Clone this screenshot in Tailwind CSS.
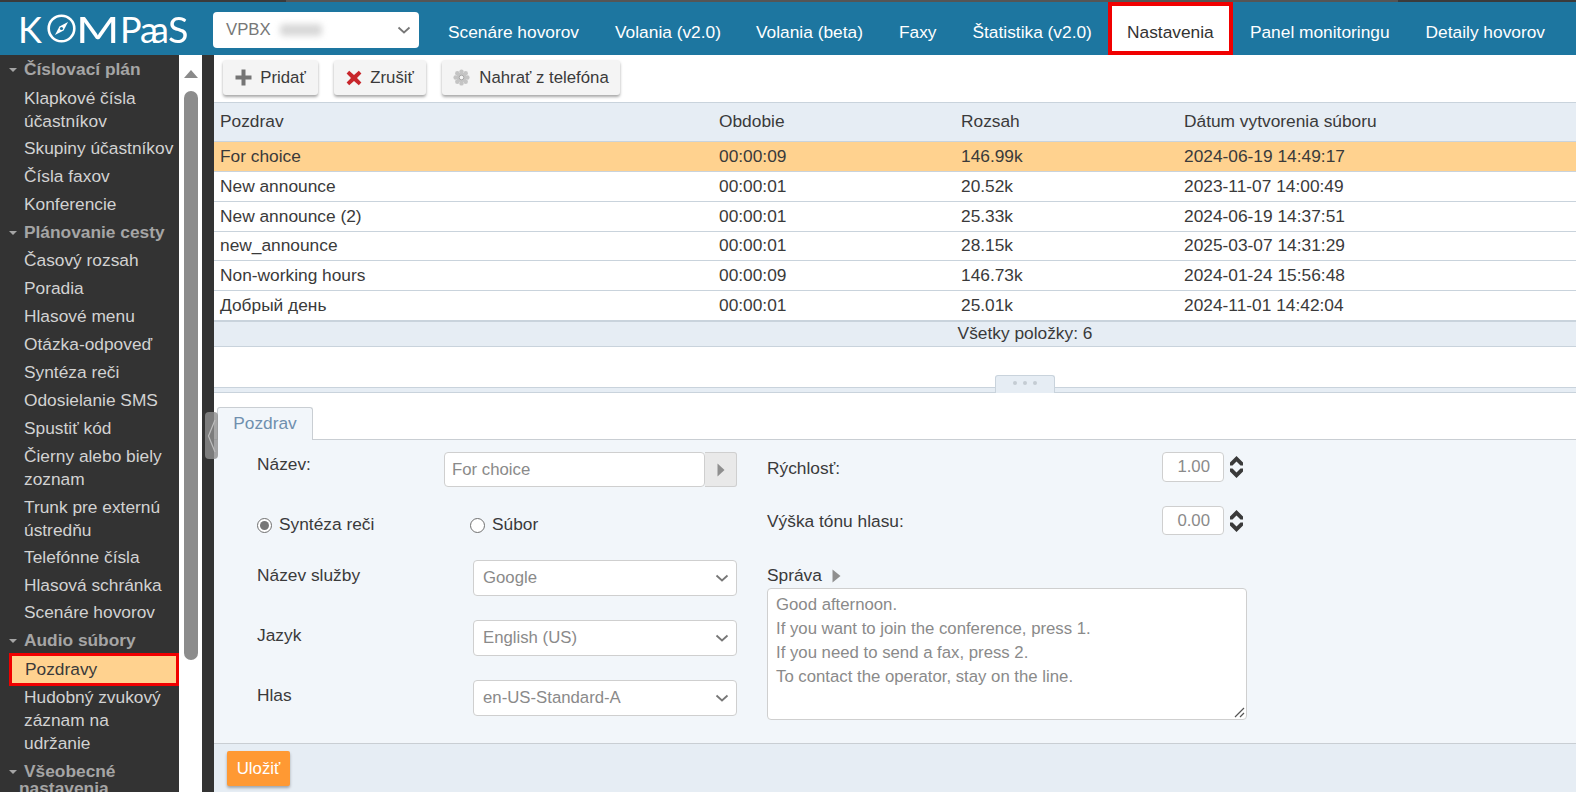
<!DOCTYPE html>
<html>
  <head>
    <meta charset="utf-8" />
    <title>Kompaas</title>
    <script src="https://cdn.jsdelivr.net/npm/@tailwindcss/browser@4"></script>
  </head>
  <body class="h-[792px] w-[1576px] overflow-hidden bg-white font-['Liberation_Sans',Arial,sans-serif] text-[17.33px] text-[#3a3a3a]">
    <!-- Top strip -->
    <div class="flex h-[2px]">
      <div class="w-[286px] bg-[#3b3b3b]"></div>
      <div class="w-[1112px] bg-[#555555]"></div>
      <div class="flex-1 bg-[#3b3b3b]"></div>
    </div>

    <!-- Header -->
    <header class="flex h-[53px] items-stretch bg-[#1d76a0] text-white">
      <div class="flex w-[213px] items-center pl-[18px] font-['Lato',sans-serif] text-[36px] font-normal leading-none">
        <span class="w-[29px]">K</span>
        <svg class="h-[29px] w-[29px]" viewBox="0 0 29 29" fill="none">
          <circle cx="14.5" cy="14.5" r="12.8" stroke="white" stroke-width="2.6" />
          <path d="M21 8 L16.6 16.6 L8 21 L12.4 12.4 Z" fill="white" />
          <circle cx="14.5" cy="14.5" r="1.6" fill="#1d76a0" />
        </svg>
        <span class="inline-block w-[44px] origin-left scale-x-[1.3]">M</span>
        <span class="inline-block w-[20px]">P</span>
        <span class="w-[28px] tracking-[-7px]">aa</span>
        <span class="inline-block origin-left scale-x-[1.05]">S</span>
      </div>
      <div class="mt-[10px] flex h-[36px] w-[206px] items-center justify-between rounded-[4px] bg-white pl-[13px] pr-[8px] text-[16.75px] text-[#777777]">
        <span class="flex items-center gap-[9px]">VPBX <span class="h-[12px] w-[42px] rounded-sm bg-[#d8d8d8] blur-[3px]"></span></span>
        <svg class="h-[8px] w-[14px]" viewBox="0 0 14 8" fill="none"><path d="M1.5 1.5 L7 6.5 L12.5 1.5" stroke="#777777" stroke-width="1.8" /></svg>
      </div>
      <nav class="ml-[29px] flex items-center">
        <a class="mr-[36px] pt-[8px]">Scenáre hovorov</a>
        <a class="mr-[35px] pt-[8px]">Volania (v2.0)</a>
        <a class="mr-[36px] pt-[8px]">Volania (beta)</a>
        <a class="mr-[36px] pt-[8px]">Faxy</a>
        <a class="mr-[16px] pt-[8px]">Štatistika (v2.0)</a>
        <a class="mr-[17px] flex h-full w-[125px] items-center justify-center border-4 border-[#f00000] bg-white pt-[8px] text-[#333333]">Nastavenia</a>
        <a class="mr-[36px] pt-[8px]">Panel monitoringu</a>
        <a class="pt-[8px]">Detaily hovorov</a>
      </nav>
    </header>

    <div class="flex h-[737px]">
      <!-- Sidebar -->
      <aside class="relative flex w-[214px] shrink-0 overflow-hidden bg-[#333333]">
        <div class="w-[179px] shrink-0 pt-px text-[#d2d2d2]">
          <div class="flex h-[28px] items-center pl-[9px] font-bold text-[#a5a5a5]"><span class="mr-[7px] h-0 w-0 border-x-[4px] border-t-[4px] border-x-transparent border-t-[#a5a5a5]"></span>Číslovací plán</div>
          <div class="py-[2.5px] pl-[24px] leading-[23px]">Klapkové čísla<br />účastníkov</div>
          <div class="flex h-[28px] items-center pl-[24px]">Skupiny účastníkov</div>
          <div class="flex h-[28px] items-center pl-[24px]">Čísla faxov</div>
          <div class="flex h-[28px] items-center pl-[24px]">Konferencie</div>
          <div class="flex h-[28px] items-center pl-[9px] font-bold text-[#a5a5a5]"><span class="mr-[7px] h-0 w-0 border-x-[4px] border-t-[4px] border-x-transparent border-t-[#a5a5a5]"></span>Plánovanie cesty</div>
          <div class="flex h-[28px] items-center pl-[24px]">Časový rozsah</div>
          <div class="flex h-[28px] items-center pl-[24px]">Poradia</div>
          <div class="flex h-[28px] items-center pl-[24px]">Hlasové menu</div>
          <div class="flex h-[28px] items-center pl-[24px]">Otázka-odpoveď</div>
          <div class="flex h-[28px] items-center pl-[24px]">Syntéza reči</div>
          <div class="flex h-[28px] items-center pl-[24px]">Odosielanie SMS</div>
          <div class="flex h-[28px] items-center pl-[24px]">Spustiť kód</div>
          <div class="pb-[2.5px] pl-[24px] pt-[2px] leading-[23px]">Čierny alebo biely<br />zoznam</div>
          <div class="pb-[2px] pl-[24px] pt-[2px] leading-[23px]">Trunk pre externú<br />ústredňu</div>
          <div class="flex h-[28px] items-center pl-[24px]">Telefónne čísla</div>
          <div class="flex h-[28px] items-center pl-[24px]">Hlasová schránka</div>
          <div class="flex h-[27px] items-center pl-[24px]">Scenáre hovorov</div>
          <div class="flex h-[28px] items-center pl-[9px] font-bold text-[#a5a5a5]"><span class="mr-[7px] h-0 w-0 border-x-[4px] border-t-[4px] border-x-transparent border-t-[#a5a5a5]"></span>Audio súbory</div>
          <div class="ml-[9px] mt-[-2px] flex h-[33px] items-center border-[3px] border-[#f00000] bg-[#ffd28f] pl-[13px] pt-[1px] text-[#3a3a3a]">Pozdravy</div>
          <div class="mt-[-2px] py-[2.5px] pl-[24px] leading-[23px]">Hudobný zvukový<br />záznam na<br />udržanie</div>
          <div class="pl-[9px] pt-[5px] font-bold leading-[17px] text-[#a5a5a5]"><span class="mr-[7px] inline-block h-0 w-0 border-x-[4px] border-t-[4px] border-x-transparent border-t-[#a5a5a5] align-middle"></span>Všeobecné<br /><span class="ml-[10px]">nastavenia</span></div>
        </div>
        <!-- Sidebar scrollbar -->
        <div class="w-[23px] shrink-0 bg-white pl-[5px] pt-[15px]">
          <div class="h-0 w-0 border-x-[7.5px] border-b-[8px] border-x-transparent border-b-[#8a8a8a]"></div>
          <div class="mt-[13px] h-[569px] w-[14px] rounded-full bg-[#8c8c8c]"></div>
        </div>
      </aside>

      <!-- Collapse handle -->
      <div class="absolute left-[205px] top-[412px] z-10 flex h-[47px] w-[13px] items-center justify-center rounded-[4px] bg-[#8f8f8f]/80">
        <svg class="h-[36px] w-[9px]" viewBox="0 0 9 36" fill="none"><path d="M8 2 L1.5 18 L8 34" stroke="#bdbdbd" stroke-width="1.2" /></svg>
      </div>

      <main class="flex min-w-0 flex-1 flex-col">
        <!-- Toolbar -->
        <div class="flex h-[47px] items-start gap-[16px] pl-[9px] pt-[5px] text-[16.8px]">
          <button class="flex h-[35px] w-[95px] items-center justify-center gap-[8px] rounded-[3px] bg-[#f4f4f4] shadow-[0_2px_3px_rgba(0,0,0,0.35)]">
            <svg class="h-[17px] w-[17px]" viewBox="0 0 17 17"><path d="M6.5 0.5 h4 v6 h6 v4 h-6 v6 h-4 v-6 h-6 v-4 h6 z" fill="#757575" /></svg>
            Pridať
          </button>
          <button class="flex h-[35px] w-[92px] items-center justify-center gap-[8px] rounded-[3px] bg-[#f4f4f4] shadow-[0_2px_3px_rgba(0,0,0,0.35)]">
            <svg class="h-[16px] w-[16px]" viewBox="0 0 16 16"><path d="M3.2 0.8 L8 5 L12.8 0.8 L15.4 3.6 L11 8 L15.4 12.4 L12.8 15.2 L8 11 L3.2 15.2 L0.6 12.4 L5 8 L0.6 3.6 Z" fill="#c8262b" /></svg>
            Zrušiť
          </button>
          <button class="flex h-[35px] w-[178px] items-center justify-center gap-[9px] rounded-[3px] bg-[#f4f4f4] shadow-[0_2px_3px_rgba(0,0,0,0.35)]">
            <svg class="h-[17px] w-[17px]" viewBox="0 0 17 17" fill="#c4c4c4">
              <circle cx="8.5" cy="2.6" r="2.2" /><circle cx="8.5" cy="14.4" r="2.2" />
              <circle cx="2.6" cy="8.5" r="2.2" /><circle cx="14.4" cy="8.5" r="2.2" />
              <circle cx="4.3" cy="4.3" r="2.2" /><circle cx="12.7" cy="4.3" r="2.2" />
              <circle cx="4.3" cy="12.7" r="2.2" /><circle cx="12.7" cy="12.7" r="2.2" />
              <circle cx="8.5" cy="8.5" r="5" />
              <circle cx="8.5" cy="8.5" r="2.3" fill="#f4f4f4" stroke="#a8a8a8" stroke-width="1" />
            </svg>
            Nahrať z telefóna
          </button>
        </div>

        <!-- Table -->
        <div class="grid h-[40px] grid-cols-[499px_242px_223px_1fr] items-center border-y border-[#c9d3dc] bg-[#e6edf4] pl-[6px]">
          <div>Pozdrav</div><div>Obdobie</div><div>Rozsah</div><div>Dátum vytvorenia súboru</div>
        </div>
        <div class="grid h-[30px] grid-cols-[499px_242px_223px_1fr] items-center border-b border-[#c9d3dc] bg-[#ffd28f] pl-[6px]">
          <div>For choice</div><div>00:00:09</div><div>146.99k</div><div>2024-06-19 14:49:17</div>
        </div>
        <div class="grid h-[30px] grid-cols-[499px_242px_223px_1fr] items-center border-b border-[#c9d3dc] pl-[6px]">
          <div>New announce</div><div>00:00:01</div><div>20.52k</div><div>2023-11-07 14:00:49</div>
        </div>
        <div class="grid h-[30px] grid-cols-[499px_242px_223px_1fr] items-center border-b border-[#c9d3dc] pl-[6px]">
          <div>New announce (2)</div><div>00:00:01</div><div>25.33k</div><div>2024-06-19 14:37:51</div>
        </div>
        <div class="grid h-[29px] grid-cols-[499px_242px_223px_1fr] items-center border-b border-[#c9d3dc] pl-[6px]">
          <div>new_announce</div><div>00:00:01</div><div>28.15k</div><div>2025-03-07 14:31:29</div>
        </div>
        <div class="grid h-[30px] grid-cols-[499px_242px_223px_1fr] items-center border-b border-[#c9d3dc] pl-[6px]">
          <div>Non-working hours</div><div>00:00:09</div><div>146.73k</div><div>2024-01-24 15:56:48</div>
        </div>
        <div class="grid h-[30px] grid-cols-[499px_242px_223px_1fr] items-center border-b border-[#c9d3dc] pl-[6px]">
          <div>Добрый день</div><div>00:00:01</div><div>25.01k</div><div>2024-11-01 14:42:04</div>
        </div>
        <div class="flex h-[26px] items-center justify-center border-y border-[#c9d3dc] bg-[#e6edf4] pl-[260px]">Všetky položky: 6</div>

        <!-- Splitter -->
        <div class="mt-[40px] flex h-[6px] justify-center border-y border-[#c9d3dc] bg-[#e6edf4] pl-[260px]">
          <div class="mt-[-13px] flex h-[18px] w-[60px] justify-center gap-[6px] rounded-t-[3px] border-x border-t border-[#c9d3dc] bg-[#e6edf4] pt-[5px]">
            <span class="h-[4px] w-[4px] rounded-full bg-[#c5ccd3]"></span>
            <span class="h-[4px] w-[4px] rounded-full bg-[#c5ccd3]"></span>
            <span class="h-[4px] w-[4px] rounded-full bg-[#c5ccd3]"></span>
          </div>
        </div>

        <!-- Tab bar -->
        <div class="h-[47px] border-b border-[#c9ced3] pl-[3px] pt-[14px]">
          <div class="flex h-[33px] w-[96px] items-center justify-center rounded-t-[3px] border-x border-t border-[#c9ced3] bg-[#f2f6fa] text-[#6f8fae]">Pozdrav</div>
        </div>

        <!-- Form -->
        <div class="flex h-[304px] border-b border-[#c9ced3] bg-[#f2f6fa]">
          <div class="w-[553px] shrink-0 pl-[43px]">
            <div class="flex h-[48px] pt-[12px]">
              <div class="w-[187px] pt-[3px] leading-[18px]">Název:</div>
              <div class="flex h-[35px] w-[293px] text-[16.75px]">
                <div class="flex flex-1 items-center rounded-[4px] border border-[#cfcfcf] bg-white pl-[7px] text-[#8a8a8a]">For choice</div>
                <div class="flex w-[32px] items-center justify-center rounded-r-[3px] border border-l-0 border-[#cfcfcf] bg-[#e9e9e9]">
                  <svg class="h-[14px] w-[8px]" viewBox="0 0 8 14"><path d="M0.5 0.5 L7.5 7 L0.5 13.5 Z" fill="#8f8f8f" /></svg>
                </div>
              </div>
            </div>
            <div class="mt-[25px] flex h-[24px] items-center">
              <span class="flex h-[15px] w-[15px] items-center justify-center rounded-full border border-[#707070] bg-white"><span class="h-[9px] w-[9px] rounded-full bg-[#777777]"></span></span>
              <span class="ml-[7px] w-[191px]">Syntéza reči</span>
              <span class="h-[15px] w-[15px] rounded-full border border-[#707070] bg-white"></span>
              <span class="ml-[7px]">Súbor</span>
            </div>
            <div class="mt-[23px] flex h-[36px]">
              <div class="w-[216px] pt-[6px] leading-[18px]">Název služby</div>
              <div class="flex w-[264px] items-center justify-between rounded-[4px] border border-[#cfcfcf] bg-white pl-[9px] pr-[7px] text-[16.75px] text-[#8a8a8a]">Google
                <svg class="h-[8px] w-[14px]" viewBox="0 0 14 8" fill="none"><path d="M1.5 1.5 L7 6.5 L12.5 1.5" stroke="#777777" stroke-width="1.8" /></svg>
              </div>
            </div>
            <div class="mt-[24px] flex h-[36px]">
              <div class="w-[216px] pt-[6px] leading-[18px]">Jazyk</div>
              <div class="flex w-[264px] items-center justify-between rounded-[4px] border border-[#cfcfcf] bg-white pl-[9px] pr-[7px] text-[16.75px] text-[#8a8a8a]">English (US)
                <svg class="h-[8px] w-[14px]" viewBox="0 0 14 8" fill="none"><path d="M1.5 1.5 L7 6.5 L12.5 1.5" stroke="#777777" stroke-width="1.8" /></svg>
              </div>
            </div>
            <div class="mt-[24px] flex h-[36px]">
              <div class="w-[216px] pt-[6px] leading-[18px]">Hlas</div>
              <div class="flex w-[264px] items-center justify-between rounded-[4px] border border-[#cfcfcf] bg-white pl-[9px] pr-[7px] text-[16.75px] text-[#8a8a8a]">en-US-Standard-A
                <svg class="h-[8px] w-[14px]" viewBox="0 0 14 8" fill="none"><path d="M1.5 1.5 L7 6.5 L12.5 1.5" stroke="#777777" stroke-width="1.8" /></svg>
              </div>
            </div>
          </div>

          <div class="w-[480px]">
            <div class="mt-[12px] flex h-[30px] justify-between">
              <span class="pt-[4px]">Rýchlosť:</span>
              <span class="flex items-center">
                <span class="flex h-[30px] w-[62px] items-center justify-end rounded-[4px] border border-[#cfcfcf] bg-white pr-[13px] text-[16.75px] text-[#8a8a8a]">1.00</span>
                <svg class="ml-[6px] mr-[4px] h-[22px] w-[13px]" viewBox="0 0 13 22"><path d="M6.5 0 L13 6.5 V9.5 H10.5 L6.5 5.5 L2.5 9.5 H0 V6.5 Z M6.5 22 L13 15.5 V12.5 H10.5 L6.5 16.5 L2.5 12.5 H0 V15.5 Z" fill="#3a3a3a" /></svg>
              </span>
            </div>
            <div class="mt-[24px] flex h-[29px] justify-between">
              <span class="pt-[3px]">Výška tónu hlasu:</span>
              <span class="flex items-center">
                <span class="flex h-[29px] w-[62px] items-center justify-end rounded-[4px] border border-[#cfcfcf] bg-white pr-[13px] text-[16.75px] text-[#8a8a8a]">0.00</span>
                <svg class="ml-[6px] mr-[4px] h-[22px] w-[13px]" viewBox="0 0 13 22"><path d="M6.5 0 L13 6.5 V9.5 H10.5 L6.5 5.5 L2.5 9.5 H0 V6.5 Z M6.5 22 L13 15.5 V12.5 H10.5 L6.5 16.5 L2.5 12.5 H0 V15.5 Z" fill="#3a3a3a" /></svg>
              </span>
            </div>
            <div class="mt-[30px] flex h-[21px] items-center gap-[10px]">Správa
              <svg class="h-[14px] w-[9px]" viewBox="0 0 9 14"><path d="M0.5 0.5 L8.5 7 L0.5 13.5 Z" fill="#8f8f8f" /></svg>
            </div>
            <div class="relative mt-[2px] h-[132px] w-[480px] rounded-[4px] border border-[#cfcfcf] bg-white px-[8px] pt-[4px] text-[16.75px] leading-[24px] text-[#8a8a8a]">
              Good afternoon.<br />If you want to join the conference, press 1.<br />If you need to send a fax, press 2.<br />To contact the operator, stay on the line.
              <svg class="absolute bottom-[1px] right-[1px] h-[11px] w-[11px]" viewBox="0 0 11 11" fill="none"><path d="M1 10 L10 1 M6 10 L10 6" stroke="#555555" stroke-width="1.2" /></svg>
            </div>
          </div>
        </div>

        <!-- Footer -->
        <div class="flex-1 bg-[#e6edf4] pl-[13px] pt-[7px]">
          <button class="h-[35px] w-[63px] rounded-[2px] bg-[#ff9933] text-[16.8px] text-white shadow-[0_2px_3px_rgba(0,0,0,0.3)]">Uložiť</button>
        </div>
      </main>
    </div>
  </body>
</html>
